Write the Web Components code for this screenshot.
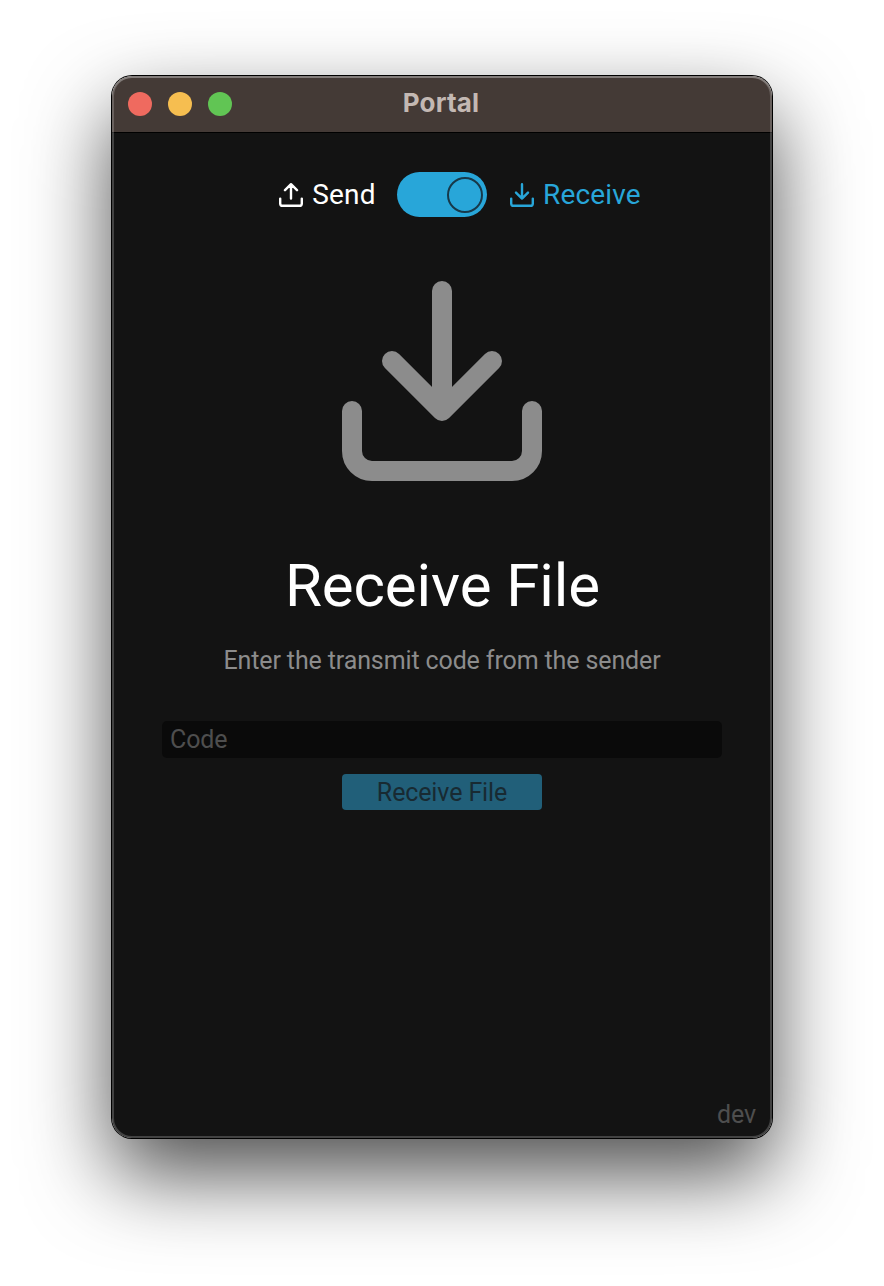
<!DOCTYPE html>
<html lang="en">
<head>
<meta charset="utf-8">
<title>Portal</title>
<style>
html,body{margin:0;height:100%;background:#fff}
body{overflow:hidden;font-family:Roboto,"Liberation Sans",sans-serif}
</style>
</head>
<body>
<portal-window></portal-window>
<script>
const define = (name, html) => customElements.define(name, class extends HTMLElement {
  constructor() {
    super();
    const t = document.createElement('template');
    t.innerHTML = html;
    this.attachShadow({ mode: 'open' }).append(t.content.cloneNode(true));
  }
});

customElements.define('transfer-icon', class extends HTMLElement {
  connectedCallback() {
    const arrow = this.getAttribute('kind') === 'send'
      ? 'M10 13V1M5 6l5-5 5 5'
      : 'M10 1v12M5 8l5 5 5-5';
    this.attachShadow({ mode: 'open' }).innerHTML = `
      <style>:host{display:block;flex:none}svg{display:block;width:100%;height:100%}</style>
      <svg viewBox="0 0 20 20" fill="none" stroke="currentColor" stroke-width="2" stroke-linecap="round" stroke-linejoin="round">
        <path d="${arrow}M1 13v4a2 2 0 0 0 2 2h14a2 2 0 0 0 2-2v-4"/>
      </svg>`;
  }
});

define('title-bar', `
<style>
:host{display:grid;grid-template-columns:1fr auto 1fr;height:56px;background:#443a36;border-bottom:1px solid #000;box-sizing:content-box}
.lights{display:flex;gap:16px;padding:16px 0 0 16px}
i{width:24px;height:24px;border-radius:50%}
.r{background:#ef6a5f}.y{background:#f6be50}.g{background:#61c554}
.t{font:700 26px/32px Inter,sans-serif;color:#c3b8b3;padding:11px 2px 0 0;letter-spacing:.2px}
</style>
<div class="lights"><i class="r"></i><i class="y"></i><i class="g"></i></div>
<div class="t"><slot></slot></div>`);

define('toggle-switch', `
<style>
:host{display:flex;justify-content:flex-end;align-items:center;box-sizing:border-box;width:90px;height:45px;padding-right:4.5px;border-radius:23px;background:#28a6d9}
i{box-sizing:border-box;width:36px;height:36px;border:2px solid #17394a;border-radius:50%}
</style><i></i>`);

define('mode-switch', `
<style>
:host{display:grid;grid-template-columns:1fr 90px 1fr;align-items:center;height:45px;font-size:28px;line-height:34px;color:#fff}
div{display:flex;align-items:center;gap:9px}
span{letter-spacing:.15px}
transfer-icon{width:24px;height:24px;margin-top:1px}
.s{justify-content:flex-end;padding-right:21.4px}
.r{padding-left:23px;color:#28a6d9}
</style>
<div class="s"><transfer-icon kind="send"></transfer-icon><span>Send</span></div>
<toggle-switch></toggle-switch>
<div class="r"><transfer-icon kind="receive"></transfer-icon><span>Receive</span></div>`);

define('code-field', `
<style>
:host{display:block;box-sizing:border-box;width:560px;height:37px;padding-left:8px;border-radius:5px;background:#0a0a0a;color:#4e4e4e;font-size:25px;line-height:37px;letter-spacing:-.12px}
</style><slot></slot>`);

define('action-button', `
<style>
:host{display:block;width:200px;height:36px;border-radius:4px;background:#215f79;color:#182a32;font-size:25px;line-height:37px;letter-spacing:-.12px;text-align:center}
</style><slot></slot>`);

define('receive-view', `
<style>
:host{display:flex;flex-direction:column;align-items:center;flex:1;background:#131313;padding-top:39px}
mode-switch{align-self:stretch}
.hero{width:200px;height:200px;margin-top:64px;color:#8c8c8c}
h1{margin:70px 0 0;padding-left:1px;font-weight:400;font-size:60px;line-height:70px;letter-spacing:-.08px;color:#fff}
p{margin:24px 0 0;font-size:25px;line-height:32px;letter-spacing:-.12px;color:#8c8c8c}
code-field{margin-top:44px}
action-button{margin-top:16px}
.v{margin:auto 16px 8px auto;font-size:25px;line-height:30px;letter-spacing:-.12px;color:#4e4e4e}
</style>
<mode-switch></mode-switch>
<transfer-icon class="hero" kind="receive"></transfer-icon>
<h1>Receive File</h1>
<p>Enter the transmit code from the sender</p>
<code-field>Code</code-field>
<action-button>Receive File</action-button>
<div class="v">dev</div>`);

define('portal-window', `
<style>
:host{display:block;padding:76px 112px 148px;box-sizing:border-box;width:884px;height:1286px}
.w{display:grid;height:1062px;border-radius:20px;box-shadow:0 0 0 1px #000,0 36px 84px rgba(0,0,0,.7)}
.c,.e{grid-area:1/1}
.c{display:flex;flex-direction:column;border-radius:20px;overflow:hidden}
.e{z-index:1;border-radius:20px;box-shadow:inset 0 0 0 2px rgba(255,255,255,.2),inset 0 2px 0 rgba(255,255,255,.18);pointer-events:none}
</style>
<div class="w"><div class="c"><title-bar>Portal</title-bar><receive-view></receive-view></div><div class="e"></div></div>`);
</script>
</body>
</html>
